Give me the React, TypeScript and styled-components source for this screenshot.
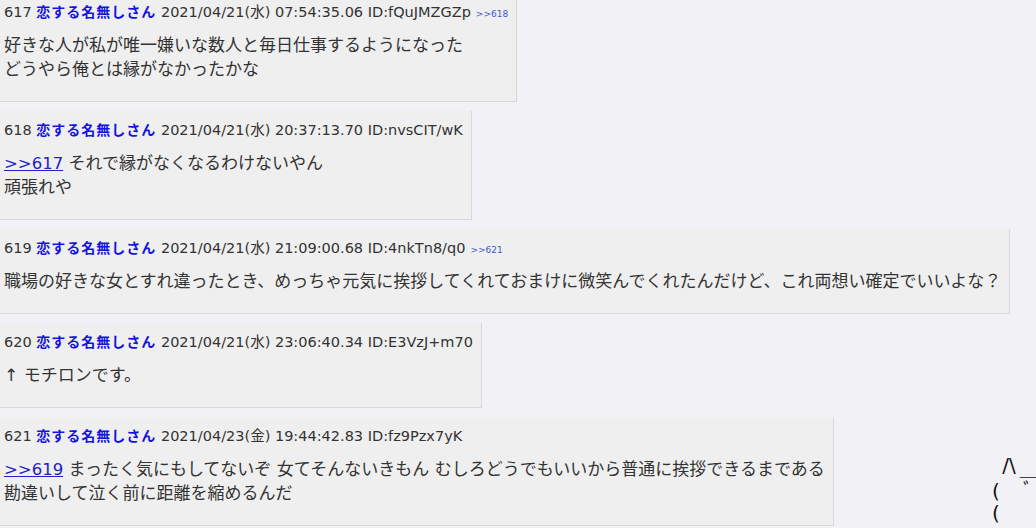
import React from "react";
import styled, { createGlobalStyle } from "styled-components";

const Global = createGlobalStyle`
  html, body { margin: 0; padding: 0; }
  body {
    background: #f1f1f6;
    font-family: "DejaVu Sans", "Noto Sans CJK JP", sans-serif;
    color: #333;
    overflow: hidden;
    width: 1036px;
    height: 528px;
  }
`;

const Thread = styled.div`
  position: relative;
  display: flex;
  flex-direction: column;
  align-items: flex-start;
  gap: 9px;
  margin-top: -7px;
  height: 535px;
`;

const Post = styled.article`
  background: #efefef;
  border-right: 1px solid #d8d8d8;
  border-bottom: 1px solid #d8d8d8;
  padding: 8px 8px 20px 4px;
  box-sizing: border-box;
`;

const Meta = styled.div`
  font-size: 14.5px;
  height: 20px;
  line-height: 20px;
  white-space: nowrap;
  color: #333;
`;

const Name = styled.b`
  color: #1414e0;
  font-weight: 700;
  font-size: 14px;
  letter-spacing: 1px;
  font-family: "Noto Sans CJK JP", sans-serif;
`;

const BackRef = styled.span`
  font-size: 9px;
  color: #3a5bd0;
  margin-left: 5px;
`;

const Body = styled.div`
  margin-top: 12px;
  font-size: 17px;
  font-family: "DejaVu Sans", "Noto Sans CJK JP", sans-serif;
  white-space: nowrap;
  color: #333;
`;

const Line = styled.div`
  height: 24px;
  line-height: 24px;
`;

const Anchor = styled.a`
  color: #2222c8;
  text-decoration: underline;
  font-size: 16.5px;
`;

const Art = styled.pre`
  position: absolute;
  left: 992px;
  top: 465px;
  margin: 0;
  font-family: "DejaVu Sans", "Noto Sans CJK JP", sans-serif;
  font-size: 20px;
  line-height: 22px;
  color: #111;
`;

const ArtTop = styled.span`
  position: relative;
  top: -4px;
`;

type P = {
  no: number;
  date: string;
  id: string;
  refs?: string;
  lines: React.ReactNode[];
};

const posts: P[] = [
  {
    no: 617,
    date: "2021/04/21(水) 07:54:35.06",
    id: "fQuJMZGZp",
    refs: ">>618",
    lines: ["好きな人が私が唯一嫌いな数人と毎日仕事するようになった", "どうやら俺とは縁がなかったかな"],
  },
  {
    no: 618,
    date: "2021/04/21(水) 20:37:13.70",
    id: "nvsCIT/wK",
    lines: [
      <>
        <Anchor href="#617">&gt;&gt;617</Anchor> それで縁がなくなるわけないやん
      </>,
      "頑張れや",
    ],
  },
  {
    no: 619,
    date: "2021/04/21(水) 21:09:00.68",
    id: "4nkTn8/q0",
    refs: ">>621",
    lines: ["職場の好きな女とすれ違ったとき、めっちゃ元気に挨拶してくれておまけに微笑んでくれたんだけど、これ両想い確定でいいよな？"],
  },
  {
    no: 620,
    date: "2021/04/21(水) 23:06:40.34",
    id: "E3VzJ+m70",
    lines: ["↑ モチロンです。"],
  },
  {
    no: 621,
    date: "2021/04/23(金) 19:44:42.83",
    id: "fz9Pzx7yK",
    lines: [
      <>
        <Anchor href="#619">&gt;&gt;619</Anchor> まったく気にもしてないぞ 女てそんないきもん むしろどうでもいいから普通に挨拶できるまである
      </>,
      "勘違いして泣く前に距離を縮めるんだ",
    ],
  },
];

export default function App() {
  return (
    <>
      <Global />
      <Thread>
        {posts.map((p) => (
          <Post key={p.no}>
            <Meta>
              {p.no} <Name>恋する名無しさん</Name> {p.date} ID:{p.id}
              {p.refs && <BackRef>{p.refs}</BackRef>}
            </Meta>
            <Body>
              {p.lines.map((l, i) => (
                <Line key={i}>{l}</Line>
              ))}
            </Body>
          </Post>
        ))}
        <Art>
          <ArtTop>{"\u00a0\u2009/\\"}</ArtTop>
          {"\u2009＿\n(\u00a0\u00a0\u00a0\u2009ﾞ\n("}
        </Art>
      </Thread>
    </>
  );
}
